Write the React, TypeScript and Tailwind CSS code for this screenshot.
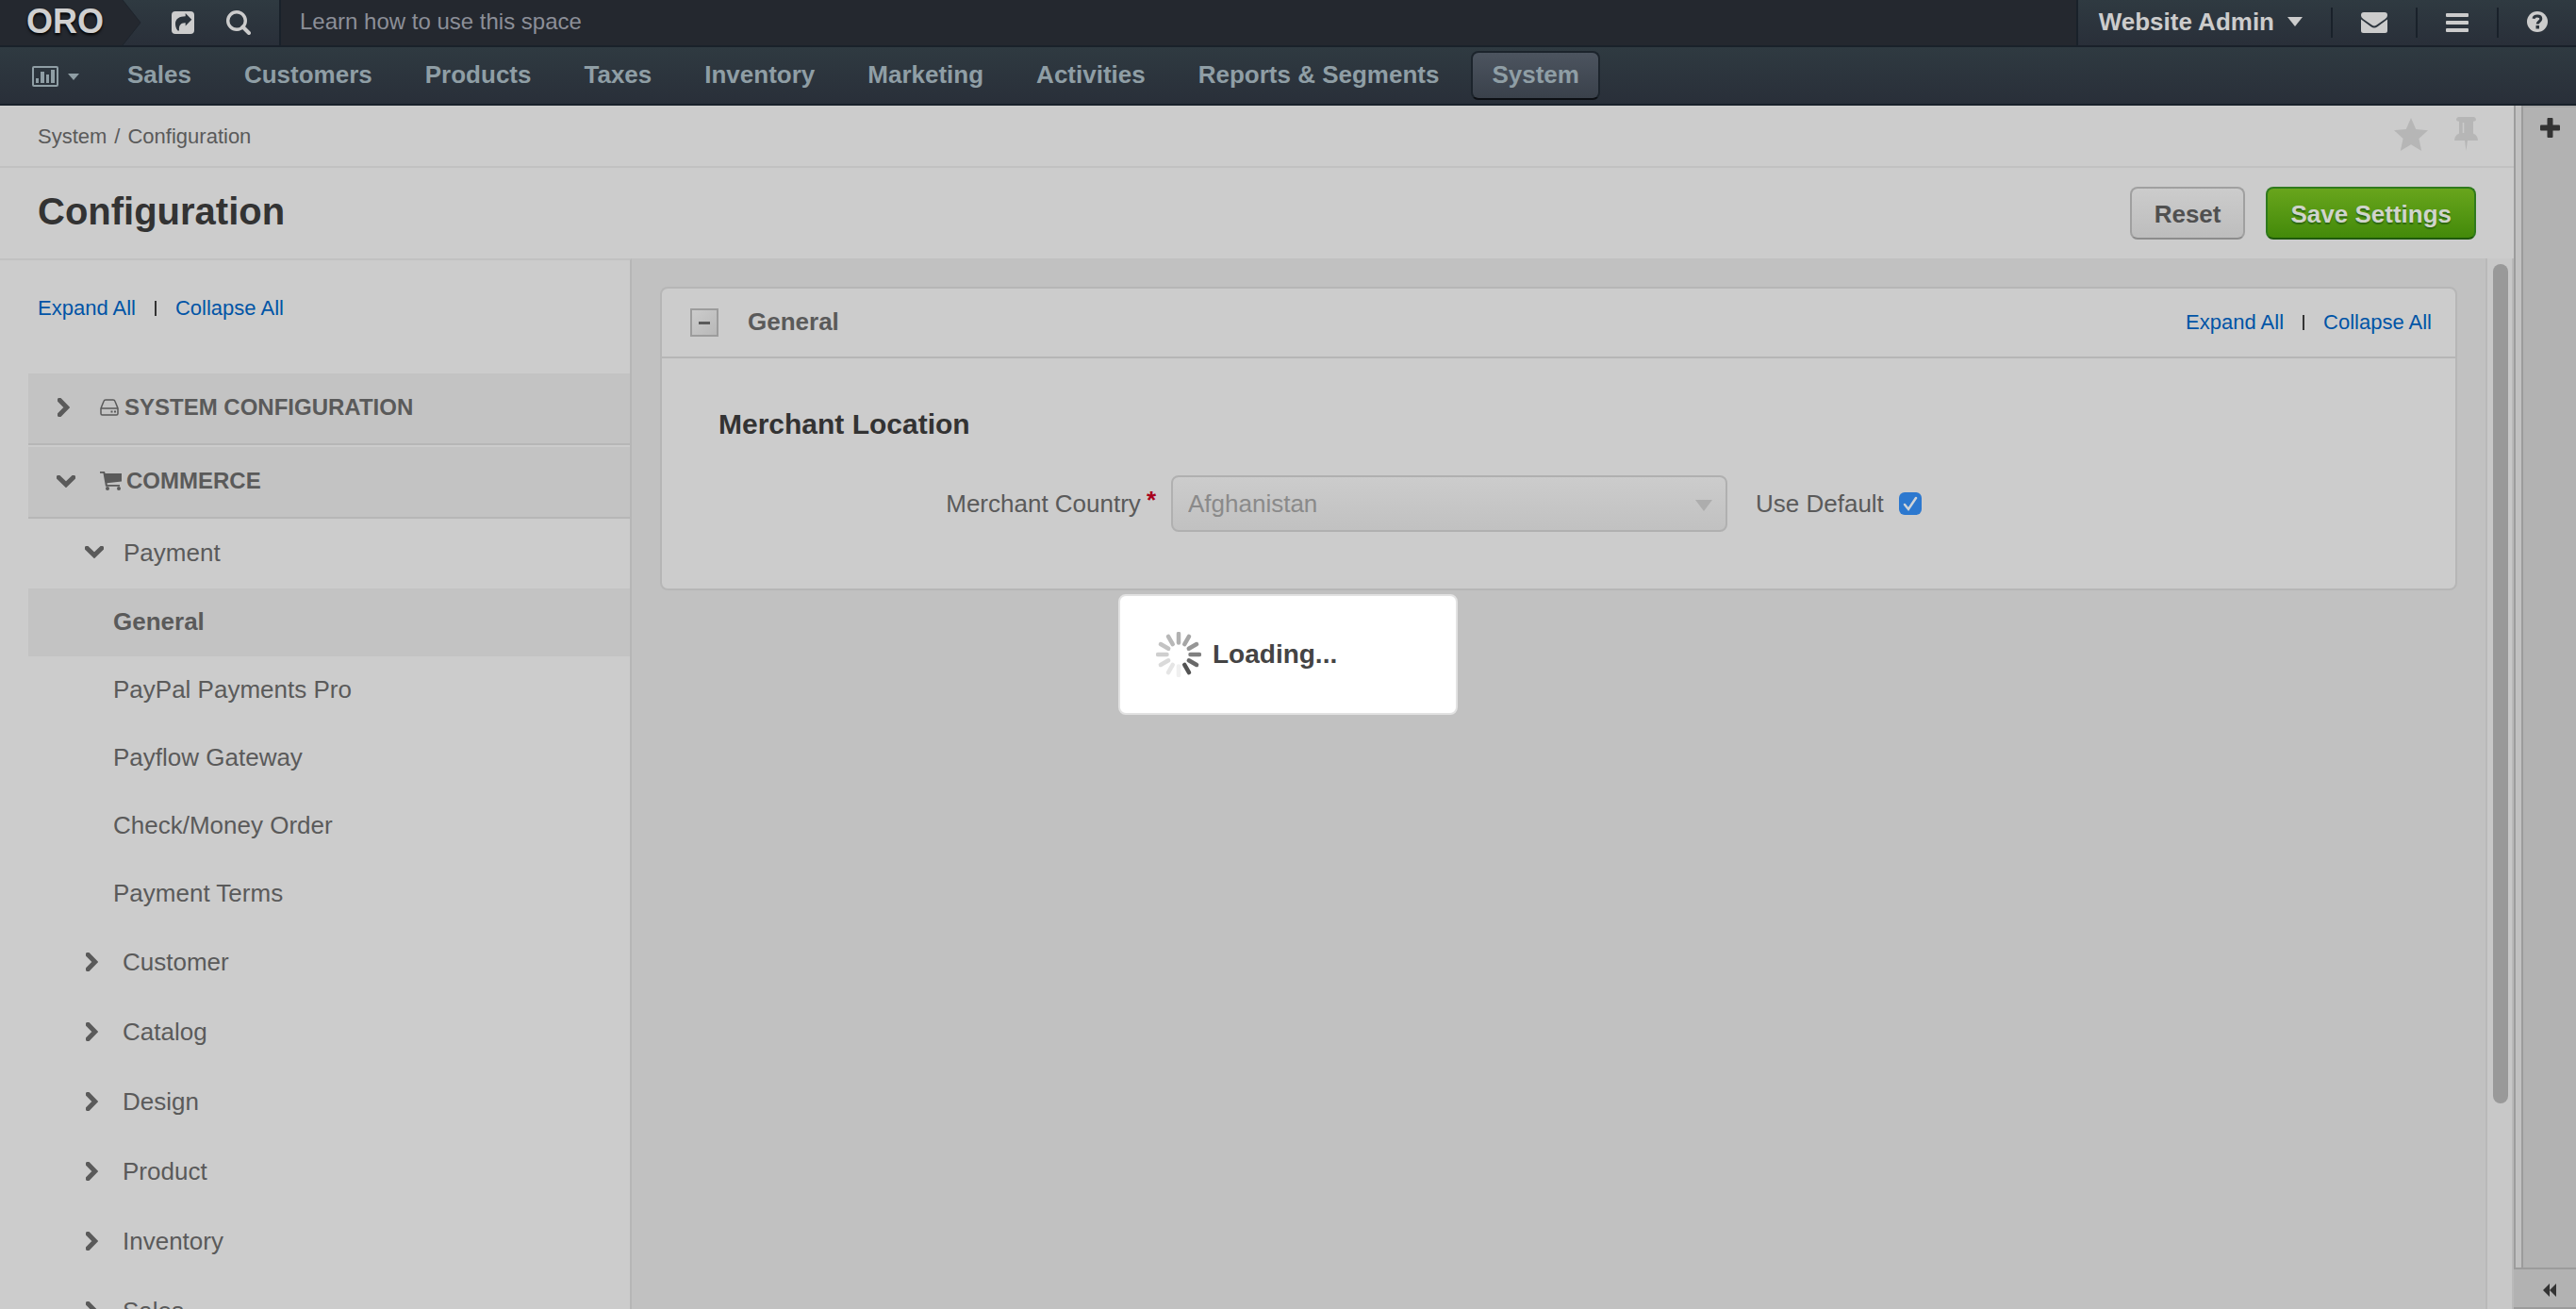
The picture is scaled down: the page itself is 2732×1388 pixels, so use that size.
import React from "react";

const navItems = ["Sales", "Customers", "Products", "Taxes", "Inventory", "Marketing", "Activities", "Reports & Segments"];
const paymentItems = ["PayPal Payments Pro", "Payflow Gateway", "Check/Money Order", "Payment Terms"];
const groups = ["Customer", "Catalog", "Design", "Product", "Inventory", "Sales"];
const spokes = [0.42, 0.48, 0.56, 0.68, 0.8, 0.92, 0.08, 0.14, 0.2, 0.26, 0.32, 0.38];

function ChevronRight() {
  return (
    <svg className="h-5 w-[13px] shrink-0" viewBox="0 0 13 20" fill="none" stroke="#5a5a5a" strokeWidth="5">
      <path d="M2.200 2.200 9.800 10l-7.600 7.800" strokeLinecap="round" />
    </svg>
  );
}

function ChevronDown() {
  return (
    <svg className="h-[13px] w-5 shrink-0" viewBox="0 0 20 13" fill="none" stroke="#5a5a5a" strokeWidth="5">
      <path d="M2.200 2.200 10 9.800l7.800-7.600" strokeLinecap="round" />
    </svg>
  );
}

function ExpandLinks() {
  return (
    <div className="flex items-center gap-5 text-[22px] leading-7 text-[#0054a6]">
      <a href="#expand">Expand All</a>
      <span className="h-4 w-0.5 bg-[#333]" />
      <a href="#collapse">Collapse All</a>
    </div>
  );
}

function TopBar() {
  return (
    <header className="flex h-[50px] shrink-0 border-b-2 border-[#19212a] bg-[#24282f]">
      <div className="flex w-[298px] shrink-0 border-r-2 border-[#19212a] bg-linear-to-b from-[#2f3a41] to-[#292f39]">
        <a href="#home" className="flex w-[130px] items-center bg-[#24282f] pb-0.5 pl-7 text-[36px] leading-10 font-bold text-[#d0d0d0] [text-shadow:0_2px_3px_#000]">
          ORO
        </a>
        <svg className="h-12 w-5" viewBox="0 0 20 48">
          <path d="M0 0 19 24 0 48z" fill="#24282f" />
          <path d="M0 0 19 24 0 48" fill="none" stroke="#1f252d" />
        </svg>
        <div className="flex items-center gap-[34px] pl-8">
          <button aria-label="Shortcuts">
            <svg className="h-6 w-6" viewBox="0 0 24 24">
              <rect width="24" height="24" rx="4" fill="#ccc" />
              <path d="M14.700 2 21.300 8.700l-6.600 6.800v-3.200C9.500 12 7.500 15 8 20.500H6.500C4.500 18 4 15.500 4 13c0-5 4.500-7.700 10.700-7.700z" fill="#2b333b" />
            </svg>
          </button>
          <button aria-label="Search">
            <svg className="h-[26px] w-[26px]" viewBox="0 0 26 26" fill="none" stroke="#ccc">
              <circle cx="11" cy="11" r="9.300" strokeWidth="3.400" />
              <path d="m17.500 17.500 6.500 6.500" strokeWidth="4" strokeLinecap="round" />
            </svg>
          </button>
        </div>
      </div>
      <p className="pl-5 text-[24px] leading-[46px] text-[#8c8f98]">Learn how to use this space</p>
      <div className="ml-auto flex items-center border-l-2 border-[#19212a] bg-linear-to-b from-[#2f3a41] to-[#292f39] text-[#ccc]">
        <button className="flex h-8 items-center gap-3.5 border-r-2 border-[#19212a] pr-[30px] pb-0.5 pl-[22px] text-[26px] leading-8 font-bold">
          Website Admin
          <svg className="h-2.5 w-4" viewBox="0 0 16 10"><path d="M0 0h16L8 10z" fill="currentColor" /></svg>
        </button>
        <button aria-label="Messages" className="flex h-8 items-center border-r-2 border-[#19212a] px-[30px]">
          <svg className="h-[22px] w-7" viewBox="0 0 28 22" fill="currentColor">
            <path d="M0 3a3 3 0 0 1 3-3h22a3 3 0 0 1 3 3c0 2-1 3-2.500 4.200L16.500 13.500c-1.800 1.400-3.200 1.400-5 0L2.500 7.200C1 6 0 5 0 3z" />
            <path d="M0 7.500 10.500 15.200c2.400 1.800 4.600 1.800 7 0L28 7.500V19.500a2.500 2.500 0 0 1-2.500 2.500h-23A2.500 2.500 0 0 1 0 19.500z" />
          </svg>
        </button>
        <button aria-label="Menu" className="flex h-8 items-center border-r-2 border-[#19212a] px-[30px]">
          <svg className="h-5 w-6" viewBox="0 0 24 20" fill="currentColor">
            <rect width="24" height="4" rx="1" /><rect y="8" width="24" height="4" rx="1" /><rect y="16" width="24" height="4" rx="1" />
          </svg>
        </button>
        <button aria-label="Help" className="flex h-8 items-center px-[30px] pb-0.5">
          <svg className="h-[22px] w-[22px]" viewBox="0 0 22 22">
            <circle cx="11" cy="11" r="11" fill="currentColor" />
            <path d="M7 7.800C7.500 4.200 14.800 4 14.800 8c0 2.700-3.600 2.700-3.600 5.500" fill="none" stroke="#2b333b" strokeWidth="3" />
            <rect x="9.500" y="15" width="3.500" height="3.500" fill="#2b333b" />
          </svg>
        </button>
      </div>
    </header>
  );
}

function MainNav() {
  return (
    <nav className="flex h-[62px] shrink-0 items-center border-b-2 border-[#19212a] bg-linear-to-b from-[#2f3a41] to-[#292f39] pl-[34px] text-[26px] leading-8 font-bold text-[#8f9ea5]">
      <button aria-label="Dashboards" className="mr-[29px] flex items-center gap-2.5 pt-0.5">
        <svg className="h-[22px] w-7" viewBox="0 0 28 22" fill="currentColor">
          <path fillRule="evenodd" d="M2 0h24a2 2 0 0 1 2 2v18a2 2 0 0 1-2 2H2a2 2 0 0 1-2-2V2a2 2 0 0 1 2-2zm0 2v18h24V2z" />
          <path d="M4 13h3v5H4zM9 6h4v12H9zM15 9h3v9h-3zM20 4h4v14h-4z" />
        </svg>
        <svg className="h-[7px] w-3" viewBox="0 0 12 7" fill="currentColor"><path d="M0 0h12L6 7z" /></svg>
      </button>
      <div className="flex items-center gap-3">
        {navItems.map((item) => (
          <a key={item} href="#nav" className="px-[22px] pb-0.5 whitespace-nowrap">{item}</a>
        ))}
        <a href="#system" className="rounded-lg border-2 border-b-[#0c0f14] border-[#1c242c] bg-linear-to-b from-[#4c545f] to-[#3a414b] px-5 pt-[7px] pb-[9px]">System</a>
      </div>
    </nav>
  );
}

function Sidebar() {
  return (
    <aside className="w-[670px] shrink-0 overflow-hidden border-t-2 border-r-2 border-t-[#c1c1c1] border-r-[#b6b6b6] pt-[37px] pl-[30px] text-[26px] leading-8 text-[#5a5a5a]">
      <div className="pb-[55px] pl-2.5"><ExpandLinks /></div>
      <button className="flex h-[76px] w-full items-center border-b-2 border-[#b6b6b6] bg-[#c3c3c3] pb-0.5 pl-[31px] text-[24px] font-bold">
        <ChevronRight />
        <svg className="mr-1.5 ml-8 h-[18px] w-5" viewBox="0 0 20 18" fill="none" stroke="#5a5a5a" strokeWidth="1.500">
          <path d="M1 10 4 2.500Q4.500 1 6 1h8q1.500 0 2 1.500L19 10v5.500q0 1.500-1.500 1.500h-15Q1 17 1 15.500zh18" />
          <path d="M11.500 13.500h2M15 13.500h2" strokeWidth="2" />
        </svg>
        SYSTEM CONFIGURATION
      </button>
      <button className="mt-0.5 flex h-[76px] w-full items-center border-b-2 border-[#b6b6b6] bg-[#c3c3c3] pb-0.5 pl-[30px] text-[24px] font-bold">
        <ChevronDown />
        <svg className="mr-1 ml-[26px] h-5 w-6" viewBox="0 0 24 20" fill="#5a5a5a">
          <path d="M0 0h5l.6 2H23v8.500L7.500 12.300l.3 1.700H21v1.800H6L3.500 1.800H0z" />
          <circle cx="8" cy="18" r="2" /><circle cx="20" cy="18" r="2" />
        </svg>
        COMMERCE
      </button>
      <button className="flex h-[74px] w-full items-center gap-[21px] pb-[3px] pl-[60px]"><ChevronDown />Payment</button>
      <a href="#general" className="flex h-[72px] items-center bg-[#c3c3c3] pb-0.5 pl-[90px] font-bold">General</a>
      {paymentItems.map((item) => (
        <a key={item} href="#payment" className="flex h-[72px] items-center pb-0.5 pl-[90px]">{item}</a>
      ))}
      {groups.map((item) => (
        <button key={item} className="flex h-[74px] w-full items-center gap-[26px] pb-[3px] pl-[61px]"><ChevronRight />{item}</button>
      ))}
    </aside>
  );
}

function SettingsPanel() {
  return (
    <section className="rounded-lg border-2 border-[#b6b6b6] bg-[#ccc] text-[26px] leading-8 text-[#5a5a5a]">
      <div className="flex h-[74px] items-center border-b-2 border-[#b6b6b6] pr-[25px] pl-[30px]">
        <button aria-label="Collapse section" className="flex h-[30px] w-[30px] items-center justify-center border-2 border-[#9c9c9c] bg-linear-to-br from-[#ccc] to-[#b8b8b8]">
          <span className="h-[3px] w-3 bg-[#5a5a5a]" />
        </button>
        <h2 className="ml-[31px] pb-[3px] font-bold">General</h2>
        <div className="ml-auto"><ExpandLinks /></div>
      </div>
      <div className="px-[60px] pt-[50px] pb-[60px]">
        <h3 className="text-[30px] leading-10 font-bold text-[#333]">Merchant Location</h3>
        <div className="mt-[34px] flex items-center">
          <label htmlFor="country" className="flex w-[464px] justify-end gap-1.5">
            Merchant Country
            <span className="leading-6 font-bold text-[#a8001c]">*</span>
          </label>
          <div className="relative ml-4 w-[590px]">
            <select id="country" disabled className="h-[60px] w-full appearance-none rounded-lg border-2 border-[#b0b0b0] bg-linear-to-b from-[#ccc] to-[#c1c1c1] px-4 text-[#8a8a8a] opacity-100">
              <option>Afghanistan</option>
            </select>
            <svg className="pointer-events-none absolute top-[26px] right-4 h-3 w-[18px]" viewBox="0 0 18 12"><path d="M0 0h18l-9 12z" fill="#adadad" /></svg>
          </div>
          <label htmlFor="use-default" className="ml-[30px]">Use Default</label>
          <span className="relative ml-4 flex">
            <input id="use-default" type="checkbox" defaultChecked className="h-6 w-6 appearance-none rounded-md bg-[#2c78cf]" />
            <svg className="pointer-events-none absolute inset-0 h-6 w-6" viewBox="0 0 24 24" fill="none" stroke="#d0d4d8" strokeWidth="2.500" strokeLinecap="round"><path d="m6 13 4 5 8-12" /></svg>
          </span>
        </div>
      </div>
    </section>
  );
}

function LoadingDialog() {
  return (
    <div role="status" className="fixed top-1/2 left-1/2 flex h-32 w-[360px] -translate-x-1/2 -translate-y-1/2 items-center gap-3 rounded-lg border-2 border-[#e2e2e2] bg-white pl-[38px] text-[28px] leading-8 font-bold text-[#444]">
      <svg className="h-12 w-12" viewBox="-24 -24 48 48">
        {spokes.map((opacity, i) => (
          <path key={i} d="M0-22V-12.500" stroke="#444" strokeWidth="4.500" strokeLinecap="round" strokeOpacity={opacity} transform={`rotate(${i * 30})`} />
        ))}
      </svg>
      Loading...
    </div>
  );
}

export default function App() {
  return (
    <div className="flex h-screen flex-col overflow-hidden bg-[#ccc] font-['Liberation_Sans',Arial,sans-serif]">
      <TopBar />
      <MainNav />
      <div className="flex min-h-0 flex-1">
        <main className="flex min-w-0 flex-1 flex-col">
          <div className="flex h-[66px] shrink-0 items-center justify-between border-b-2 border-[#c1c1c1] pr-[38px] pb-1 pl-10 text-[22px] leading-7 text-[#5a5a5a]">
            <p className="flex gap-2 pt-1.5"><a href="#system">System</a><span>/</span><span>Configuration</span></p>
            <div className="flex items-center gap-7">
              <button aria-label="Favorite">
                <svg className="h-[35px] w-9" viewBox="0 0 36 35"><path d="m18 0 5.200 12L36 13.200l-9.600 8.700L29.200 35 18 28.300 6.800 35l2.800-13.100L0 13.200 12.800 12z" fill="#b6b6b6" /></svg>
              </button>
              <button aria-label="Pin">
                <svg className="h-9 w-[25px]" viewBox="0 0 25 36">
                  <path d="M4 0h17q2 1 2 3 0 1.500-3 1.800v12.700q5 2 5 7.500H14l-1.500 11L11 25H0q0-5.500 5-7.500V4.800Q2 4.500 2 3q0-2 2-3z" fill="#b6b6b6" />
                  <path d="M9.500 6v11" stroke="#ccc" strokeWidth="1.500" />
                </svg>
              </button>
            </div>
          </div>
          <div className="flex h-24 shrink-0 items-center justify-between pr-10 pl-10">
            <h1 className="pb-1 text-[40px] leading-[48px] font-bold text-[#333]">Configuration</h1>
            <div className="flex gap-[22px] text-[26px] leading-8 font-bold">
              <button className="h-14 rounded-lg border-2 border-[#a0a0a0] border-b-[#8c8c8c] bg-linear-to-b from-[#ccc] to-[#bdbdbd] px-6 pt-0.5 text-[#505050]">Reset</button>
              <button className="h-14 rounded-lg border-2 border-[#2f7a1c] border-b-[#1f5a0c] bg-linear-to-b from-[#68a51c] to-[#438a09] px-6 pt-0.5 text-[#d0d4cc] [text-shadow:0_2px_1px_#2f6a10]">Save Settings</button>
            </div>
          </div>
          <div className="flex min-h-0 flex-1">
            <Sidebar />
            <div className="min-w-0 flex-1 bg-[#c1c1c1] px-[30px] pt-[30px]"><SettingsPanel /></div>
            <div className="flex w-[30px] shrink-0 justify-end border-x-2 border-[#b9b9b9] bg-[#c8c8c8] pt-1.5 pr-1">
              <div className="h-[890px] w-4 rounded-full bg-[#999]" />
            </div>
          </div>
        </main>
        <aside className="flex w-[66px] shrink-0 flex-col bg-[#b2b2b2]">
          <div className="flex min-h-0 flex-1 border-l-2 border-[#9c9c9c]">
            <div className="w-2 border-r-2 border-[#9c9c9c] bg-[#c1c1c1]" />
            <div className="flex flex-1 justify-center border-t-2 border-[#a8a8a8] pt-[11px]">
              <button aria-label="Add widget" className="h-[21px]">
                <svg className="h-[21px] w-[21px]" viewBox="0 0 21 21" fill="#333"><rect x="7.500" width="6" height="21" rx="1" /><rect y="7.500" width="21" height="6" rx="1" /></svg>
              </button>
            </div>
          </div>
          <div className="flex h-11 items-center justify-center border-y-2 border-[#9c9c9c] pt-1 pl-2.5">
            <button aria-label="Expand sidebar">
              <svg className="h-[14px] w-[14px]" viewBox="0 0 14 14" fill="#333"><path d="M7 0v14L0 7zM14 0v14L7 7z" /></svg>
            </button>
          </div>
        </aside>
      </div>
      <LoadingDialog />
    </div>
  );
}
